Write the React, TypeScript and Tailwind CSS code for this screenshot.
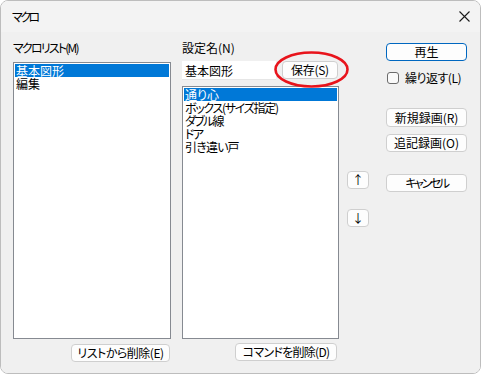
import React from "react";

const font = "font-['Noto_Sans_CJK_JP','Noto_Sans',sans-serif] [font-feature-settings:'palt']";

function Btn({ children, className = "", primary = false }: { children: React.ReactNode; className?: string; primary?: boolean }) {
  return (
    <div
      className={`flex items-center justify-center rounded-[4px] border bg-[#fdfdfd] text-[12px] leading-none text-black ${
        primary ? "border-[#0067c0]" : "border-[#cfcfcf]"
      } ${className}`}
    >
      {children}
    </div>
  );
}

export default function App() {
  return (
    <div className={`relative h-[375px] w-[481px] bg-white ${font}`}>
      <div className="flex h-[374px] w-[481px] flex-col overflow-hidden rounded-[8px] border border-[#bdbdbd]">
        {/* title bar */}
        <div className="flex h-[31px] items-center justify-between bg-[#f3f3f3] pl-[11px] pr-[10px]">
          <span className="text-[12px] leading-none tracking-[-2.5px] text-black">マクロ</span>
          <svg width="11" height="11" viewBox="0 0 11 11">
            <path d="M0.5 0.5 L10.5 10.5 M10.5 0.5 L0.5 10.5" stroke="#1a1a1a" strokeWidth="1.1" />
          </svg>
        </div>
        {/* body */}
        <div className="flex flex-1 bg-[#f0f0f0] pl-[12px] pt-[8px] text-[12px] text-black">
          {/* left column */}
          <div className="flex w-[158px] flex-col">
            <div className="h-[16px] leading-[16px] tracking-[-1.8px]">マクロリスト(M)</div>
            <div className="mt-[6px] h-[277px] border border-[#868a91] bg-white p-[1px]">
              <div className="h-[13px] bg-[#0078d7] pl-[1px] leading-[13px] text-white">基本図形</div>
              <div className="h-[13px] pl-[1px] leading-[13px]">編集</div>
            </div>
            <div className="mt-[5px] flex justify-end">
              <Btn className="mr-[1px] h-[18px] w-[99px] tracking-[-0.5px]">リストから削除(E)</Btn>
            </div>
          </div>
          {/* middle column */}
          <div className="ml-[11px] flex w-[157px] flex-col">
            <div className="h-[16px] leading-[16px]">設定名(N)</div>
            <div className="mt-[5px] flex h-[19px] items-start">
              <div className="h-[19px] w-[94px] border-b border-[#e6e6e6] bg-white pl-[3px] leading-[19px]">基本図形</div>
              <Btn className="ml-[6px] h-[18px] w-[56px] tracking-[-0.3px]">保存(S)</Btn>
            </div>
            <div className="mt-[6px] h-[253px] border border-[#868a91] bg-white p-[1px]">
              <div className="h-[13px] bg-[#0078d7] pl-[1px] leading-[13px] text-white">通り心</div>
              <div className="h-[13px] pl-[1px] leading-[13px] tracking-[-1.3px]">ボックス(サイズ指定)</div>
              <div className="h-[13px] pl-[1px] leading-[13px] tracking-[-1.7px]">ダブル線</div>
              <div className="h-[13px] pl-[1px] leading-[13px] tracking-[-1.5px]">ドア</div>
              <div className="h-[13px] pl-[1px] leading-[13px] tracking-[-0.8px]">引き違い戸</div>
            </div>
            <div className="mt-[4px] flex justify-end">
              <Btn className="mr-[2px] h-[18px] w-[102px] tracking-[-0.7px]">コマンドを削除(D)</Btn>
            </div>
          </div>
          {/* up/down column */}
          <div className="ml-[8px] flex w-[22px] flex-col pt-[131px]">
            <Btn className="h-[18px] w-[22px] text-[11px]">↑</Btn>
            <Btn className="mt-[20px] h-[18px] w-[22px] text-[11px]">↓</Btn>
          </div>
          {/* right column */}
          <div className="ml-[17px] flex w-[81px] flex-col pt-[3px]">
            <Btn primary className="h-[18px] w-[81px]">再生</Btn>
            <div className="mt-[9px] flex h-[16px] items-center">
              <div className="ml-[1px] h-[12px] w-[12px] rounded-[3px] border border-[#6b6b6b] bg-[#fafafa]" />
              <span className="ml-[6px] leading-[16px] tracking-[-0.5px]">繰り返す(L)</span>
            </div>
            <Btn className="mt-[22px] h-[19px] w-[81px]">新規録画(R)</Btn>
            <Btn className="mt-[7px] h-[18px] w-[81px]">追記録画(O)</Btn>
            <Btn className="mt-[22px] h-[18px] w-[81px] tracking-[-2.4px]">キャンセル</Btn>
          </div>
        </div>
      </div>
      {/* red annotation ellipse */}
      <svg className="absolute left-[273px] top-[50px]" width="78" height="40" viewBox="0 0 78 40">
        <ellipse cx="38.5" cy="19.5" rx="36" ry="17" fill="none" stroke="#e8141c" strokeWidth="2.6" />
      </svg>
    </div>
  );
}
